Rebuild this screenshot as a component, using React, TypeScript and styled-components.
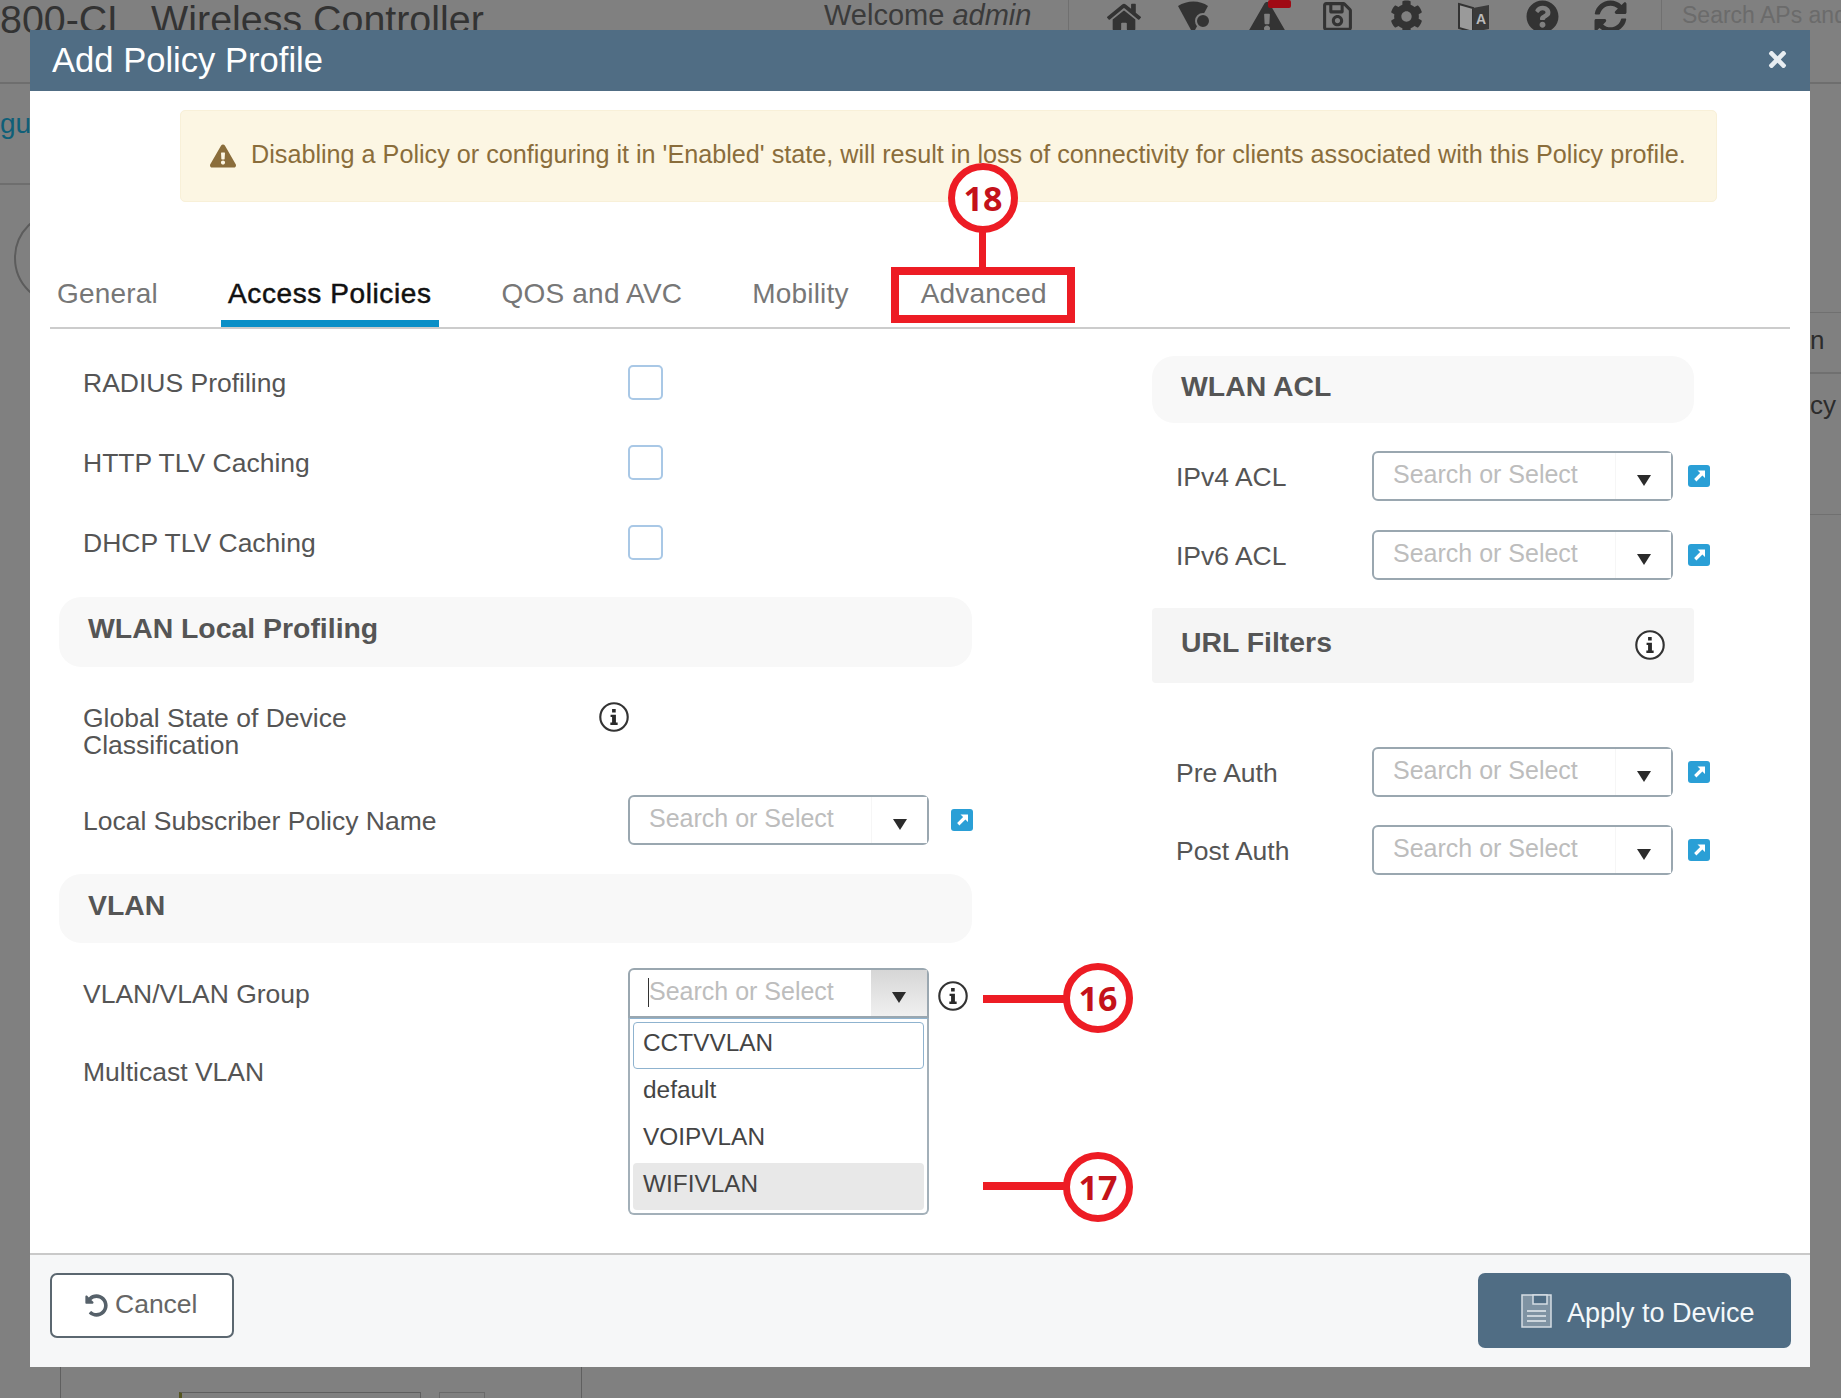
import React from 'react';
import styled, { createGlobalStyle } from 'styled-components';
import { FaHome, FaCog, FaQuestionCircle, FaSyncAlt, FaRegSave, FaExclamationTriangle, FaUndoAlt, FaTimes } from 'react-icons/fa';

const GlobalStyle = createGlobalStyle`
  html, body {
    margin: 0;
    padding: 0;
    background: #808080;
    font-family: "Liberation Sans", Arial, sans-serif;
  }
`;

const Info = () => (
  <InfoSvg viewBox="0 0 28 28">
    <circle cx="14" cy="14" r="12.8" fill="#fff" stroke="#333" strokeWidth="2" />
    <path d="M12.2 6.5h3.4v3.2h-3.4zM10.8 11.8h5v7.4h1.6v2.3h-6.8v-2.3h1.6v-5.1h-1.4z" fill="#2a2a2a" />
  </InfoSvg>
);

const ExternalLink = ({ $gap }: { $gap: number }) => (
  <ExternalSvg $gap={$gap} viewBox="0 0 22 22">
    <rect width="22" height="22" rx="3" fill="#2a9fd6" />
    <path d="M9.5 5.5h7.5v7.5l-2.6-2.6-6 6-2.3-2.3 6-6z" fill="#fff" />
  </ExternalSvg>
);

const Select = ({ active }: { active?: boolean }) => (
  <SelectBox $active={active}>
    <Placeholder $active={active}>Search or Select</Placeholder>
    <ArrowButton $active={active}>
      <Arrow />
    </ArrowButton>
  </SelectBox>
);

const Callout = ({ n, $x, $y }: { n: number; $x: number; $y: number }) => (
  <Circle $x={$x} $y={$y}>{n}</Circle>
);

const App = () => {
  return (
    <Page>
      <GlobalStyle />
      <TopBar>
        <ProductName>800-CL&nbsp; Wireless Controller</ProductName>
        <Welcome>Welcome <em>admin</em></Welcome>
        <TopIcons>
          <FaHome size={34} />
          <svg width="36" height="34" viewBox="0 0 36 34">
            <path d="M2 6c9-6 22-6 30 0L19 30h-4z" fill="#333" />
            <circle cx="27" cy="21" r="7" fill="#333" stroke="#808080" strokeWidth="2" />
          </svg>
          <AlertIcon>
            <FaExclamationTriangle size={38} />
            <Badge />
          </AlertIcon>
          <FaRegSave size={33} />
          <FaCog size={33} />
          <svg width="32" height="34" viewBox="0 0 32 34" fontFamily="Liberation Sans" fontSize="14" fontWeight="700">
            <path d="M1 4l14 4v24L1 28z" fill="#9a9a9a" stroke="#333" strokeWidth="2" />
            <path d="M15 8l16-3v24l-16 3z" fill="#3a3a3a" />
            <text x="18" y="24" fill="#bbb">A</text>
          </svg>
          <FaQuestionCircle size={33} />
          <FaSyncAlt size={33} />
        </TopIcons>
        <TopSearch>Search APs and</TopSearch>
      </TopBar>

      <Middle>
        <LeftEdge>
          <EdgeLink>gu</EdgeLink>
          <EdgeArc />
        </LeftEdge>
        <RightEdge>
          <EdgeText $h={61} $pad={12}>n</EdgeText>
          <EdgeText $h={142} $pad={16}>cy</EdgeText>
        </RightEdge>
      </Middle>

      <BottomPeek>
        <PeekTable>
          <PeekInput />
          <PeekButton />
        </PeekTable>
      </BottomPeek>

      <Modal>
        <ModalHeader>
          <ModalTitle>Add Policy Profile</ModalTitle>
          <CloseIcon><FaTimes size={25} /></CloseIcon>
        </ModalHeader>

        <ModalBody>
          <Warning>
            <FaExclamationTriangle size={26} />
            <WarningText>Disabling a Policy or configuring it in 'Enabled' state, will result in loss of connectivity for clients associated with this Policy profile.</WarningText>
          </Warning>

          <Tabs>
            <Tab>General</Tab>
            <Tab $active>Access Policies</Tab>
            <Tab>QOS and AVC</Tab>
            <Tab>Mobility</Tab>
            <Tab>Advanced</Tab>
          </Tabs>

          <Columns>
            <LeftColumn>
              <CheckRow><Label>RADIUS Profiling</Label><Checkbox /></CheckRow>
              <CheckRow><Label>HTTP TLV Caching</Label><Checkbox /></CheckRow>
              <CheckRow><Label>DHCP TLV Caching</Label><Checkbox /></CheckRow>

              <Band $top={15} $h={70}><span>WLAN Local Profiling</span></Band>

              <FormRow $top={38}>
                <Label $lines>Global State of Device<br />Classification</Label>
                <InfoNudge><Info /></InfoNudge>
              </FormRow>
              <FormRow $top={36}>
                <Label>Local Subscriber Policy Name</Label>
                <Controls><Select /><ExternalLink $gap={22} /></Controls>
              </FormRow>

              <Band $top={29} $h={69}><span>VLAN</span></Band>

              <FormRow $top={25}>
                <Label>VLAN/VLAN Group</Label>
                <Controls>
                  <SelectHolder>
                    <Select active />
                    <Dropdown>
                      <DropItem $focused>CCTVVLAN</DropItem>
                      <DropItem>default</DropItem>
                      <DropItem>VOIPVLAN</DropItem>
                      <DropItem $hover>WIFIVLAN</DropItem>
                    </Dropdown>
                  </SelectHolder>
                  <InfoGap><Info /></InfoGap>
                </Controls>
              </FormRow>
              <FormRow $top={36}>
                <Label>Multicast VLAN</Label>
              </FormRow>
            </LeftColumn>

            <RightColumn>
              <Band $top={14} $h={67} $narrow><span>WLAN ACL</span></Band>
              <AclRow $top={28}>
                <Label>IPv4 ACL</Label>
                <Controls><Select /><ExternalLink $gap={15} /></Controls>
              </AclRow>
              <AclRow $top={29}>
                <Label>IPv6 ACL</Label>
                <Controls><Select /><ExternalLink $gap={15} /></Controls>
              </AclRow>
              <Band $top={28} $h={75} $narrow $square>
                <span>URL Filters</span>
                <BandInfo><Info /></BandInfo>
              </Band>
              <AclRow $top={64}>
                <Label>Pre Auth</Label>
                <Controls><Select /><ExternalLink $gap={15} /></Controls>
              </AclRow>
              <AclRow $top={28}>
                <Label>Post Auth</Label>
                <Controls><Select /><ExternalLink $gap={15} /></Controls>
              </AclRow>
            </RightColumn>
          </Columns>
        </ModalBody>

        <ModalFooter>
          <CancelButton><FaUndoAlt size={23} /><CancelText>Cancel</CancelText></CancelButton>
          <ApplyButton>
            <svg width="31" height="34" viewBox="0 0 31 34">
              <path d="M1 1h29v32H1z" fill="#7f93a3" stroke="#d5dde3" strokeWidth="1.5" />
              <path d="M12 1h14v9H12z" fill="#506d84" stroke="#d5dde3" strokeWidth="1.5" />
              <path d="M6 17h19M6 22h19M6 27h19" stroke="#e6ecef" strokeWidth="1.5" />
            </svg>
            <ApplyText>Apply to Device</ApplyText>
          </ApplyButton>
        </ModalFooter>
      </Modal>

      <TabHighlight />
      <Callout n={18} $x={948} $y={163} />
      <VerticalLead />
      <Callout n={16} $x={1063} $y={963} />
      <HorizontalLead $y={995} />
      <Callout n={17} $x={1063} $y={1152} />
      <HorizontalLead $y={1182} />
    </Page>
  );
};

export default App;

const Page = styled.div`
  position: relative;
  width: 1841px;
  height: 1398px;
  overflow: hidden;
  display: flex;
  flex-direction: column;
  background: #808080;
`;

const TopBar = styled.div`
  height: 82px;
  flex-shrink: 0;
  border-bottom: 2px solid #6e6e6e;
  display: flex;
  align-items: flex-start;
  color: #333;
`;

const ProductName = styled.div`
  width: 824px;
  flex-shrink: 0;
  font-size: 39.4px;
  line-height: 38px;
  white-space: nowrap;
  color: #333;
`;

const Welcome = styled.div`
  width: 245px;
  flex-shrink: 0;
  box-sizing: border-box;
  font-size: 29px;
  line-height: 31px;
  color: #3b3b3b;
  border-right: 1px solid #707070;
  height: 30px;
`;

const TopIcons = styled.div`
  width: 593px;
  flex-shrink: 0;
  padding: 0 34px 0 38px;
  box-sizing: border-box;
  display: flex;
  justify-content: space-between;
  border-right: 1px solid #707070;
  height: 30px;
`;

const AlertIcon = styled.div`
  position: relative;
  height: 34px;
`;

const Badge = styled.span`
  position: absolute;
  top: 0;
  right: -5px;
  width: 23px;
  height: 8px;
  background: #a00a14;
  border-radius: 2px;
`;

const TopSearch = styled.div`
  flex-shrink: 0;
  padding-left: 20px;
  font-size: 23px;
  line-height: 30px;
  color: #6b6b6b;
  white-space: nowrap;
`;

const Middle = styled.div`
  flex: 1;
  display: flex;
  justify-content: space-between;
`;

const LeftEdge = styled.div`
  width: 30px;
  overflow: hidden;
`;

const EdgeLink = styled.div`
  height: 101px;
  border-bottom: 2px solid #6e6e6e;
  padding-top: 24px;
  box-sizing: border-box;
  font-size: 28px;
  line-height: 32px;
  color: #0f5f78;
`;

const EdgeArc = styled.div`
  width: 90px;
  height: 90px;
  margin: 26px 0 0 14px;
  border: 2px solid #5c5c5c;
  border-radius: 50%;
`;

const RightEdge = styled.div`
  width: 31px;
  overflow: hidden;
  padding-top: 228px;
  box-sizing: border-box;
`;

const EdgeText = styled.div<{ $h: number; $pad: number }>`
  height: ${(p) => p.$h}px;
  padding-top: ${(p) => p.$pad}px;
  box-sizing: border-box;
  font-size: 26px;
  line-height: 30px;
  color: #2c2c2c;
  border-top: 1px solid #707070;
  border-bottom: 1px solid #707070;
`;

const BottomPeek = styled.div`
  height: 31px;
  flex-shrink: 0;
  padding-left: 60px;
`;

const PeekTable = styled.div`
  width: 522px;
  height: 31px;
  border-left: 1px solid #5f5f5f;
  border-right: 1px solid #5f5f5f;
  display: flex;
  align-items: flex-start;
  padding: 25px 0 0 118px;
  box-sizing: border-box;
  gap: 18px;
`;

const PeekInput = styled.div`
  width: 238px;
  height: 10px;
  border: 1px solid #5f5f5f;
  border-left: 3px solid #55551f;
`;

const PeekButton = styled.div`
  width: 44px;
  height: 10px;
  border: 1px solid #6a6a6a;
`;

const Modal = styled.div`
  position: absolute;
  left: 30px;
  top: 30px;
  width: 1780px;
  height: 1337px;
  display: flex;
  flex-direction: column;
  background: #fff;
`;

const ModalHeader = styled.div`
  height: 61px;
  flex-shrink: 0;
  padding: 0 20px 0 22px;
  box-sizing: border-box;
  display: flex;
  align-items: center;
  justify-content: space-between;
  background: #506d84;
  color: #e8edf1;
`;

const ModalTitle = styled.div`
  font-size: 34.6px;
  color: #fff;
`;

const CloseIcon = styled.div`
  display: flex;
  margin-bottom: 2px;
`;

const ModalBody = styled.div`
  flex: 1;
  padding: 19px 20px 0;
`;

const Warning = styled.div`
  width: 1537px;
  height: 92px;
  margin-left: 130px;
  padding-left: 29px;
  box-sizing: border-box;
  display: flex;
  align-items: center;
  gap: 15px;
  background: #fcf6e3;
  border: 1px solid #f8f0d8;
  border-radius: 5px;
  color: #8a6d3b;
  font-size: 25.2px;
  white-space: nowrap;
`;

const WarningText = styled.span`
  padding-bottom: 4px;
`;

const Tabs = styled.div`
  height: 127px;
  box-sizing: border-box;
  display: flex;
  align-items: flex-end;
  gap: 56px;
  border-bottom: 2px solid #ccc;
`;

const Tab = styled.div<{ $active?: boolean }>`
  height: 58px;
  padding: 0 7px;
  box-sizing: border-box;
  line-height: 50px;
  font-size: 28px;
  letter-spacing: ${(p) => (p.$active ? '0.6px' : '0.2px')};
  color: ${(p) => (p.$active ? '#111' : '#777')};
  border-bottom: 7px solid ${(p) => (p.$active ? '#0a8fc7' : 'transparent')};
  -webkit-text-stroke: ${(p) => (p.$active ? '0.5px #111' : '0')};
  &:last-child {
    margin-left: 2px;
  }
`;

const Columns = styled.div`
  display: flex;
  padding: 13px 0 0 9px;
`;

const LeftColumn = styled.div`
  width: 913px;
`;

const RightColumn = styled.div`
  width: 558px;
  margin-left: 180px;
`;

const CheckRow = styled.div`
  height: 80px;
  display: grid;
  grid-template-columns: 569px 35px;
  align-items: center;
`;

const Label = styled.div<{ $lines?: boolean }>`
  padding: ${(p) => (p.$lines ? '0' : '2px')} 0 0 24px;
  font-size: 26.5px;
  line-height: ${(p) => (p.$lines ? '27px' : '32px')};
  color: #555;
`;

const Checkbox = styled.div`
  width: 35px;
  height: 35px;
  box-sizing: border-box;
  background: #fff;
  border: 2.5px solid #a9c8e6;
  border-radius: 5px;
`;

const Band = styled.div<{ $top: number; $h: number; $square?: boolean; $narrow?: boolean }>`
  height: ${(p) => p.$h}px;
  margin-top: ${(p) => p.$top}px;
  max-width: ${(p) => (p.$narrow ? '542px' : 'none')};
  padding: 0 29px 7px 29px;
  box-sizing: border-box;
  display: flex;
  align-items: center;
  justify-content: space-between;
  background: ${(p) => (p.$square ? '#f5f5f5' : '#f8f8f8')};
  border-radius: ${(p) => (p.$square ? '4px' : '22px')};
  font-size: 28.4px;
  font-weight: 700;
  color: #555;
`;

const BandInfo = styled.div`
  display: flex;
  margin-top: 6px;
`;

const FormRow = styled.div<{ $top: number }>`
  margin-top: ${(p) => p.$top}px;
  display: grid;
  grid-template-columns: 569px auto;
  align-items: center;
`;

const AclRow = styled.div<{ $top: number }>`
  margin-top: ${(p) => p.$top}px;
  display: grid;
  grid-template-columns: 220px auto;
  align-items: center;
`;

const Controls = styled.div`
  display: flex;
  align-items: center;
`;

const SelectHolder = styled.div`
  position: relative;
`;

const SelectBox = styled.div<{ $active?: boolean }>`
  width: 301px;
  height: 50px;
  box-sizing: border-box;
  display: flex;
  border: 2px solid #9aa7b0;
  border-radius: ${(p) => (p.$active ? '6px 6px 0 0' : '6px')};
  background: #fff;
`;

const Placeholder = styled.div<{ $active?: boolean }>`
  position: relative;
  flex: 1;
  padding: 0 0 4px 19px;
  display: flex;
  align-items: center;
  font-size: 25px;
  color: #bdbdbd;
  ${(p) =>
    p.$active &&
    `&::before {
      content: '';
      position: absolute;
      left: 18px;
      top: 8px;
      width: 1px;
      height: 29px;
      background: #333;
    }`}
`;

const ArrowButton = styled.div<{ $active?: boolean }>`
  width: 56px;
  display: flex;
  align-items: center;
  justify-content: center;
  padding-top: 8px;
  box-sizing: border-box;
  background: ${(p) => (p.$active ? 'linear-gradient(#d6d6d6, #f0f0f0)' : '#fff')};
  border-left: ${(p) => (p.$active ? '0' : '1px solid #f6f6f6')};
`;

const Arrow = styled.span`
  width: 0;
  height: 0;
  border-left: 7px solid transparent;
  border-right: 7px solid transparent;
  border-top: 11px solid #2b2b2b;
`;

const Dropdown = styled.div`
  position: absolute;
  left: 0;
  top: 100%;
  width: 301px;
  height: 197px;
  padding: 3px 3px;
  box-sizing: border-box;
  background: #fff;
  border: 2px solid #a3b0b9;
  border-top: 1px solid #8fb3cf;
  border-radius: 0 0 6px 6px;
`;

const DropItem = styled.div<{ $focused?: boolean; $hover?: boolean }>`
  height: 47px;
  padding: 0 0 5px 9px;
  box-sizing: border-box;
  display: flex;
  align-items: center;
  font-size: 24.4px;
  color: #444;
  border-radius: 4px;
  background: ${(p) => (p.$hover ? '#e8e8e8' : '#fff')};
  border: 1px solid ${(p) => (p.$focused ? '#8fb3cf' : 'transparent')};
`;

const InfoSvg = styled.svg`
  width: 30px;
  height: 30px;
  flex-shrink: 0;
`;

const InfoNudge = styled.div`
  margin: -26px 0 0 -29px;
`;

const InfoGap = styled.div`
  margin: 6px 0 0 9px;
  display: flex;
`;

const ExternalSvg = styled.svg<{ $gap: number }>`
  width: 22px;
  height: 22px;
  margin-left: ${(p) => p.$gap}px;
`;

const ModalFooter = styled.div`
  height: 114px;
  flex-shrink: 0;
  padding: 18px 19px 0 20px;
  box-sizing: border-box;
  display: flex;
  align-items: flex-start;
  justify-content: space-between;
  background: #f6f7f8;
  border-top: 2px solid #c9c9c9;
`;

const CancelButton = styled.div`
  width: 184px;
  height: 65px;
  box-sizing: border-box;
  padding-left: 33px;
  display: flex;
  align-items: center;
  gap: 7px;
  background: #fff;
  border: 2px solid #5b6770;
  border-radius: 7px;
  font-size: 26.5px;
  color: #666;
  svg {
    color: #56616a;
  }
`;

const CancelText = styled.span`
  padding-bottom: 3px;
`;

const ApplyButton = styled.div`
  width: 313px;
  height: 75px;
  padding-left: 43px;
  box-sizing: border-box;
  display: flex;
  align-items: center;
  gap: 15px;
  background: #506d84;
  border-radius: 7px;
  font-size: 27px;
  color: #f4f8fa;
`;

const ApplyText = styled.span`
  padding-top: 6px;
`;

const TabHighlight = styled.div`
  position: absolute;
  left: 891px;
  top: 267px;
  width: 184px;
  height: 56px;
  box-sizing: border-box;
  border: 8px solid #ed1c24;
`;

const Circle = styled.div<{ $x: number; $y: number }>`
  position: absolute;
  left: ${(p) => p.$x}px;
  top: ${(p) => p.$y}px;
  width: 70px;
  height: 70px;
  box-sizing: border-box;
  display: flex;
  align-items: center;
  justify-content: center;
  background: #fff;
  border: 7px solid #ed1c24;
  border-radius: 50%;
  font-family: "Open Sans", "Liberation Sans", sans-serif;
  font-size: 34px;
  font-weight: 700;
  color: #c4121a;
`;

const VerticalLead = styled.div`
  position: absolute;
  left: 979px;
  top: 232px;
  width: 7px;
  height: 36px;
  background: #ed1c24;
`;

const HorizontalLead = styled.div<{ $y: number }>`
  position: absolute;
  left: 983px;
  top: ${(p) => p.$y}px;
  width: 82px;
  height: 8px;
  background: #ed1c24;
`;
